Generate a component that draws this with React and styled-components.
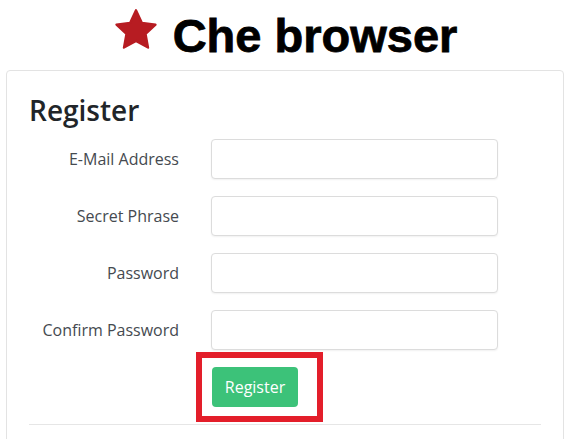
import React from "react";
import styled, { createGlobalStyle } from "styled-components";

const GlobalStyle = createGlobalStyle`
  body {
    margin: 0;
    background: #fff;
    font-family: "Open Sans", "Noto Sans", sans-serif;
    overflow: hidden;
  }
`;

const Page = styled.div`
  width: 568px;
`;

const Header = styled.header`
  height: 70px;
  display: flex;
  align-items: flex-start;
  justify-content: center;
  gap: 14px;
  padding: 8px 0 0 2px;
  box-sizing: border-box;
`;

const Brand = styled.h1`
  margin: 4px 0 0;
  font-family: "Liberation Sans", Arial, sans-serif;
  font-weight: 700;
  font-size: 47px;
  line-height: 1;
  color: #000;
  -webkit-text-stroke: 0.8px #000;
`;

const Card = styled.div`
  margin: 0 4px 0 6px;
  border: 1px solid #e3e3e3;
  border-radius: 4px;
  padding: 21px 22px 40px;
`;

const Title = styled.h2`
  margin: 0 0 11px;
  font-size: 28px;
  font-weight: 600;
  line-height: 36px;
  color: #212529;
`;

const Form = styled.form`
  display: grid;
  grid-template-columns: 150px 287px;
  column-gap: 32px;
  row-gap: 17px;
  align-items: center;
`;

const Label = styled.label`
  text-align: right;
  font-size: 16px;
  color: #454a50;
`;

const Input = styled.input`
  height: 40px;
  box-sizing: border-box;
  border: 1px solid #dcdcdc;
  border-radius: 4px;
  box-shadow: 0 1px 2px rgba(0, 0, 0, 0.06);
  background: #fff;
`;

const Highlight = styled.div`
  grid-column: 2;
  justify-self: start;
  margin: -15px 0 0 -15px;
  border: 6px solid #e31e2a;
  padding: 9px 19px 9px 10px;
`;

const Button = styled.button`
  width: 86px;
  height: 40px;
  border: none;
  border-radius: 4px;
  background: #3cc279;
  color: #fff;
  font-family: "Open Sans", sans-serif;
  font-size: 16px;
  display: block;
`;

const Rule = styled.hr`
  margin: 2px 0 0;
  border: none;
  border-top: 1px solid #e6e6e6;
`;

const Star = () => (
  <svg width="46" height="44" viewBox="0 0 24 23">
    <path
      d="M12 1.2l3.1 6.6 7.1.9-5.2 4.9 1.3 7.1L12 17.2l-6.3 3.5L7 13.6 1.8 8.7l7.1-.9z"
      fill="#b71c22"
      stroke="#b71c22"
      strokeWidth="1.2"
      strokeLinejoin="round"
    />
  </svg>
);

const fields = [
  { id: "email", label: "E-Mail Address", type: "email" },
  { id: "phrase", label: "Secret Phrase", type: "text" },
  { id: "password", label: "Password", type: "password" },
  { id: "confirm", label: "Confirm Password", type: "password" },
];

const App = () => (
  <Page>
    <GlobalStyle />
    <Header>
      <Star />
      <Brand>Che browser</Brand>
    </Header>
    <Card>
      <Title>Register</Title>
      <Form onSubmit={(e) => e.preventDefault()}>
        {fields.map((f) => (
          <React.Fragment key={f.id}>
            <Label htmlFor={f.id}>{f.label}</Label>
            <Input id={f.id} type={f.type} />
          </React.Fragment>
        ))}
        <Highlight>
          <Button type="submit">Register</Button>
        </Highlight>
      </Form>
      <Rule />
    </Card>
  </Page>
);

export default App;
